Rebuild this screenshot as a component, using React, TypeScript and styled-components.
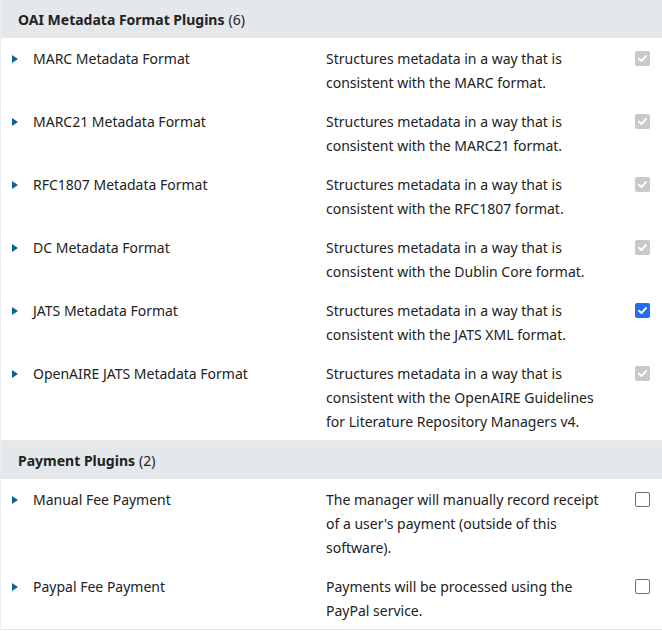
import React from 'react';
import styled, { createGlobalStyle } from "styled-components";

const GlobalStyle = createGlobalStyle`
    body {
        margin: 0;
        background: #fff;
        font-family: "Noto Sans", "Open Sans", sans-serif;
        color: #222;
    }
`;

const Wrapper = styled.div`
    width: 662px;
    border-left: 1px solid #ececec;
    border-bottom: 1px solid #e4e4e4;
    box-sizing: border-box;
`;

const Category = styled.section`
    & + &{
        border-top: 1px solid #e8eaec;
    }
`;

const CategoryHeader = styled.div`
    height: 38px;
    display: flex;
    align-items: center;
    padding-left: 17px;
    background: #e5e8ea;
    font-size: 14px;

    strong{
        font-weight: 700;
        margin-right: 4px;
    }
`;

const Row = styled.div`
    display: grid;
    grid-template-columns: 32px 293px 282px 1fr;
    padding: 9px 0 6px 0;
    font-size: 14px;
    line-height: 24px;
`;

const Toggle = styled.div`
    display: flex;
    align-items: flex-start;
    padding-left: 11px;
    padding-top: 8px;

    &:before{
        content: "";
        display: block;
        width: 0;
        height: 0;
        border-top: 4px solid transparent;
        border-bottom: 4px solid transparent;
        border-left: 6px solid #006798;
    }
`;

const Name = styled.div``;

const Desc = styled.div``;

const CheckCell = styled.div`
    display: flex;
    justify-content: flex-start;
    padding-left: 27px;
    padding-top: 4px;
`;

type BoxState = "locked" | "on" | "off";

const Box = styled.span<{ $state: BoxState }>`
    width: 15px;
    height: 15px;
    box-sizing: border-box;
    border-radius: 2px;
    display: flex;
    align-items: center;
    justify-content: center;
    background: ${p => p.$state === "locked" ? "#c9c9cc" : p.$state === "on" ? "#1f6ff0" : "#fff"};
    border: ${p => p.$state === "off" ? "1.5px solid #6f6f76" : "none"};
`;

function Checkbox({state}: {state: BoxState}) {
    return (
        <Box $state={state}>
            {state !== "off" && (
                <svg width="11" height="11" viewBox="0 0 11 11">
                    <path d="M2 5.8 L4.4 8.1 L9 3" fill="none" stroke="#fff" strokeWidth="1.9" strokeLinecap="round" strokeLinejoin="round"/>
                </svg>
            )}
        </Box>
    );
}

interface IPlugin {
    name: string;
    desc: string;
    state: BoxState;
}

interface ICategory {
    title: string;
    plugins: IPlugin[];
}

const categories: ICategory[] = [
    {
        title: "OAI Metadata Format Plugins",
        plugins: [
            {name: "MARC Metadata Format", desc: "Structures metadata in a way that is consistent with the MARC format.", state: "locked"},
            {name: "MARC21 Metadata Format", desc: "Structures metadata in a way that is consistent with the MARC21 format.", state: "locked"},
            {name: "RFC1807 Metadata Format", desc: "Structures metadata in a way that is consistent with the RFC1807 format.", state: "locked"},
            {name: "DC Metadata Format", desc: "Structures metadata in a way that is consistent with the Dublin Core format.", state: "locked"},
            {name: "JATS Metadata Format", desc: "Structures metadata in a way that is consistent with the JATS XML format.", state: "on"},
            {name: "OpenAIRE JATS Metadata Format", desc: "Structures metadata in a way that is consistent with the OpenAIRE Guidelines for Literature Repository Managers v4.", state: "locked"},
        ],
    },
    {
        title: "Payment Plugins",
        plugins: [
            {name: "Manual Fee Payment", desc: "The manager will manually record receipt of a user's payment (outside of this software).", state: "off"},
            {name: "Paypal Fee Payment", desc: "Payments will be processed using the PayPal service.", state: "off"},
        ],
    },
];

function App() {
    return (
        <Wrapper>
            <GlobalStyle/>
            {categories.map(cat => (
                <Category key={cat.title}>
                    <CategoryHeader>
                        <strong>{cat.title}</strong>
                        <span>({cat.plugins.length})</span>
                    </CategoryHeader>
                    {cat.plugins.map(p => (
                        <Row key={p.name}>
                            <Toggle/>
                            <Name>{p.name}</Name>
                            <Desc>{p.desc}</Desc>
                            <CheckCell>
                                <Checkbox state={p.state}/>
                            </CheckCell>
                        </Row>
                    ))}
                </Category>
            ))}
        </Wrapper>
    );
}

export default App;
